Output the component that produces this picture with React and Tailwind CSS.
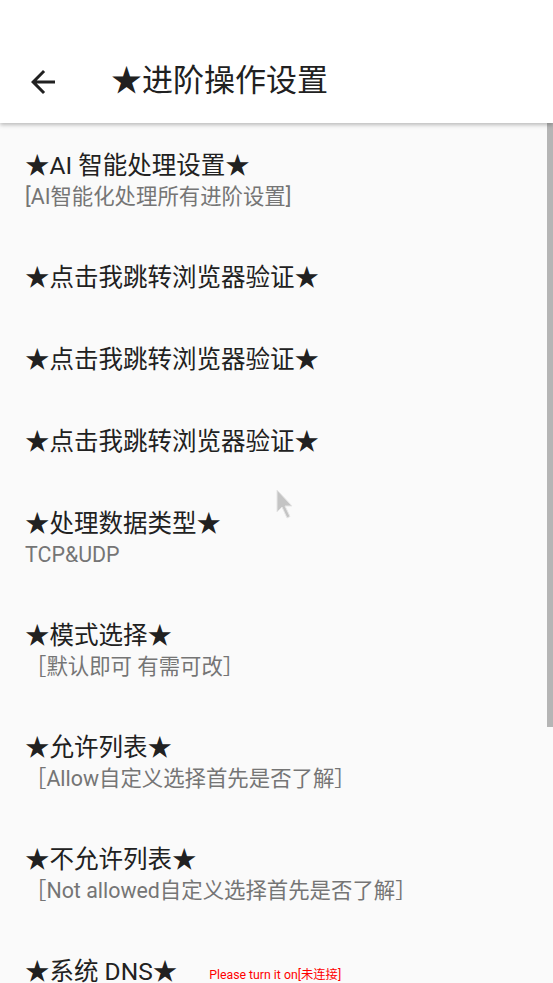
import React from "react";

const font = { fontFamily: "Roboto, 'Noto Sans CJK SC', sans-serif" };

const items = [
  { title: "★AI 智能处理设置★", sub: "[AI智能化处理所有进阶设置]" },
  { title: "★点击我跳转浏览器验证★" },
  { title: "★点击我跳转浏览器验证★" },
  { title: "★点击我跳转浏览器验证★" },
  { title: "★处理数据类型★", sub: "TCP&UDP" },
  { title: "★模式选择★", sub: "［默认即可 有需可改］" },
  { title: "★允许列表★", sub: "［Allow自定义选择首先是否了解］" },
  { title: "★不允许列表★", sub: "［Not allowed自定义选择首先是否了解］" },
  { title: "★系统 DNS★", extra: "Please turn it on[未连接]" },
];

export default function App() {
  return (
    <div className="relative w-[553px] h-[983px] overflow-hidden bg-[#fafafa]" style={font}>
      <header className="relative z-10 h-[123px] bg-white shadow-[0_2px_4px_rgba(0,0,0,0.25)] flex items-end">
        <div className="flex items-center h-[82px] w-full">
          <svg className="ml-[25px] w-[36px] h-[36px]" viewBox="0 0 24 24" fill="#212121">
            <path d="M20 11H7.83l5.59-5.59L12 4l-8 8 8 8 1.41-1.41L7.83 13H20v-2z" />
          </svg>
          <h1 className="ml-[50px] mb-[2px] text-[31px] leading-[40px] text-[#212121] font-normal">★进阶操作设置</h1>
        </div>
      </header>
      <main className="flex flex-col">
        {items.map((it, i) => (
          <div key={i} className="px-[25px] pt-[27px] pb-[23px] flex flex-col">
            <div className="flex items-end">
              <span className="text-[24.5px] leading-[32px] text-[#212121]">{it.title}</span>
              {it.extra && (
                <span className="ml-[32px] mb-[5px] text-[12.3px] leading-[16px] text-[#ff0000]">{it.extra}</span>
              )}
            </div>
            {it.sub && <span className="text-[21.4px] leading-[30px] text-[#757575]">{it.sub}</span>}
          </div>
        ))}
      </main>
      <div className="absolute right-0 top-[123px] w-[6px] h-[604px] bg-[#b5b5b5]" />
      <svg className="absolute left-[274px] top-[488px] w-[24px] h-[34px]" viewBox="0 0 24 34">
        <path d="M3 2 L3 24 L8 19 L13 30 L16 28.5 L11 18 L18 18 Z" fill="#c4c4c4" stroke="#e6e6e6" strokeWidth="1" />
      </svg>
    </div>
  );
}
